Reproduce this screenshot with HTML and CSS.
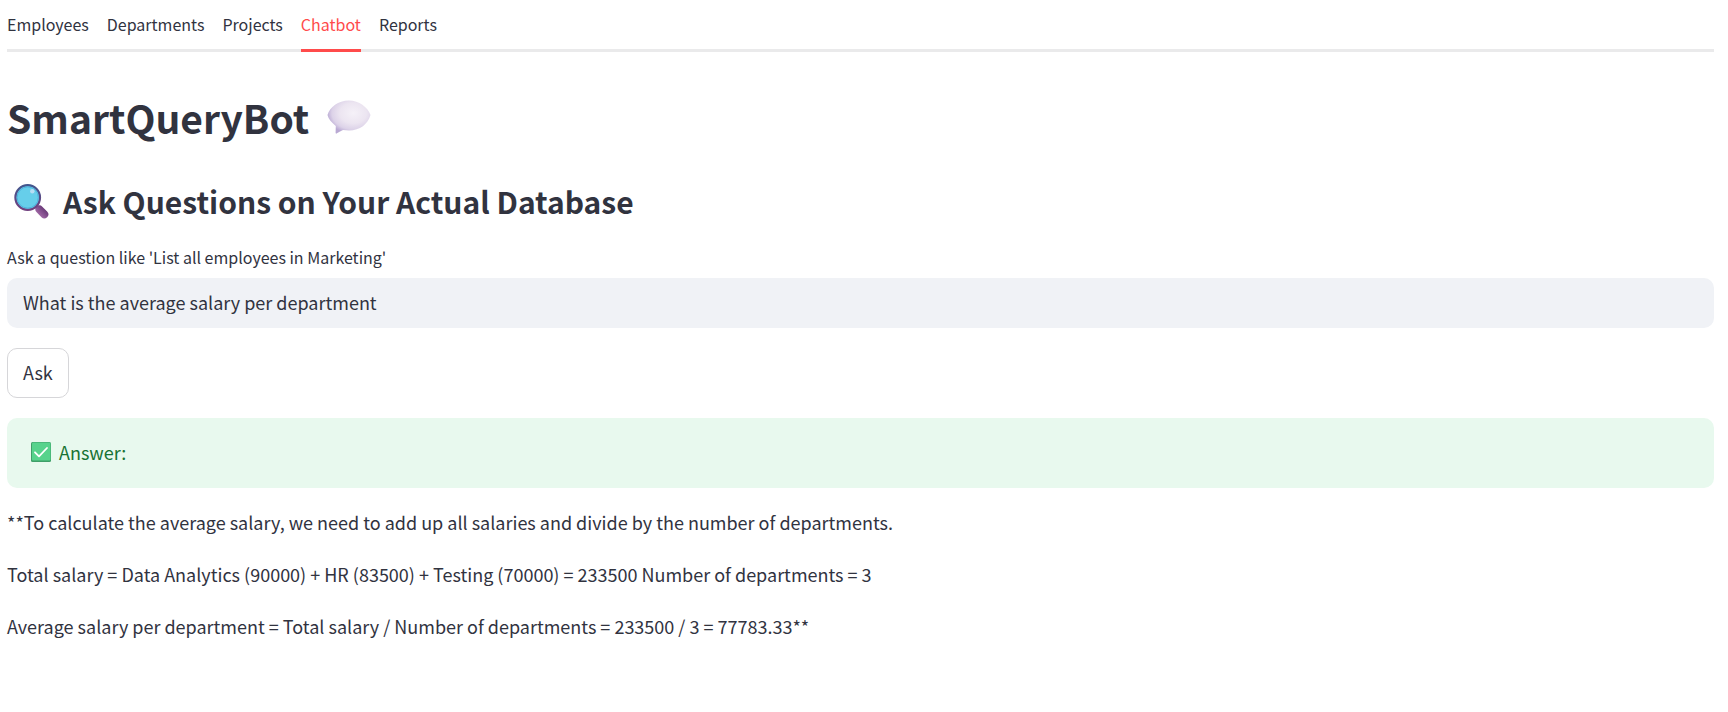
FILE: index.html
```html
<!DOCTYPE html>
<html lang="en">
<head>
  <meta charset="utf-8">
  <meta name="viewport" content="width=device-width, initial-scale=1">
  <title>SmartQueryBot</title>
  <link rel="stylesheet" href="styles.css">
</head>
<body>
  <nav class="tabs">
    <a class="tab" href="#employees">Employees</a>
    <a class="tab" href="#departments">Departments</a>
    <a class="tab" href="#projects">Projects</a>
    <a class="tab tab-active" href="#chatbot" aria-current="page">Chatbot</a>
    <a class="tab" href="#reports">Reports</a>
  </nav>
  <main class="page">
    <h1 class="title">
      <span>SmartQueryBot</span>
      <svg class="title-icon" viewBox="0 0 44 34" aria-hidden="true">
        <defs>
          <radialGradient id="bubble" cx="0.6" cy="0.38" r="0.62">
            <stop offset="0" stop-color="#f5f1f8"/>
            <stop offset="0.5" stop-color="#ece5f1"/>
            <stop offset="0.8" stop-color="#dcd2e8"/>
            <stop offset="1" stop-color="#b9a9d3"/>
          </radialGradient>
        </defs>
        <path fill="url(#bubble)" d="M22 0.500C32 0.500 40.500 7 43.500 15C41 24 33 30.500 22 30.500C20 30.500 18 30.200 16 30C13.500 31 11.500 32.200 9.500 33.500Q8.600 34 8.600 32.500L8.800 26C4.500 22.500 1.500 19 .5 15C3 7 11 .5 22 .5Z"/>
      </svg>
    </h1>
    <h2 class="subtitle">
      <svg class="subtitle-icon" viewBox="0 0 35 35" aria-hidden="true">
        <defs>
          <linearGradient id="handle" x1="0" y1="1" x2="1" y2="0">
            <stop offset="0" stop-color="#9a62a0"/>
            <stop offset="1" stop-color="#6f3e7c"/>
          </linearGradient>
          <linearGradient id="rim" x1="0" y1="0" x2="0" y2="1">
            <stop offset="0" stop-color="#42568d"/>
            <stop offset="1" stop-color="#71407f"/>
          </linearGradient>
        </defs>
        <path d="M22 22L30 30" stroke="#6f3e7c" stroke-width="4"/>
        <path d="M25.500 25.500L30.300 30.300" stroke="url(#handle)" stroke-width="8" stroke-linecap="round"/>
        <circle cx="13.700" cy="13.500" r="12.300" fill="#66ceea" stroke="url(#rim)" stroke-width="2.200"/>
        <circle cx="13.700" cy="13.500" r="10.600" fill="none" stroke="#4fb2dc" stroke-width="1"/>
        <circle cx="18.300" cy="7.300" r="2.200" fill="#b8def4"/>
      </svg>
      <span>Ask Questions on Your Actual Database</span>
    </h2>
    <form class="query">
      <label class="query-label" for="question">Ask a question like 'List all employees in Marketing'</label>
      <input class="query-input" id="question" type="text" value="What is the average salary per department">
      <button class="query-button" type="button">Ask</button>
    </form>
    <div class="alert" role="status">
      <svg class="alert-icon" viewBox="0 0 20 20" aria-hidden="true">
        <rect width="20" height="20" rx="1.500" fill="#3f9f68"/>
        <rect x="1" y="0.500" width="18.500" height="18" rx="1" fill="#57d38c"/>
        <path d="M4 10.300L8 14.300L16 6" fill="none" stroke="#fff" stroke-width="1.800" stroke-linecap="round" stroke-linejoin="round"/>
      </svg>
      <span>Answer:</span>
    </div>
    <section class="answer">
      <p class="answer-line">**To calculate the average salary, we need to add up all salaries and divide by the number of departments.</p>
      <p class="answer-line">Total salary = Data Analytics (90000) + HR (83500) + Testing (70000) = 233500 Number of departments = 3</p>
      <p class="answer-line">Average salary per department = Total salary / Number of departments = 233500 / 3 = 77783.33**</p>
    </section>
  </main>
</body>
</html>
```
FILE: styles.css
```css
* {
  box-sizing: border-box;
}

body {
  margin: 0;
  padding: 0 14px 0 7px;
  background: #fff;
  color: #31333f;
  font-family: "Noto Sans CJK SC", "Noto Sans", sans-serif;
  font-size: 18px;
  line-height: 32px;
}

.tabs {
  display: flex;
  gap: 18px;
  border-bottom: 3px solid #eaeaeb;
}

.tab {
  margin-bottom: -3px;
  padding: 4px 0 5px;
  border-bottom: 3px solid transparent;
  color: inherit;
  font-size: 16px;
  line-height: 40px;
  text-decoration: none;
}

.tab-active {
  border-bottom-color: #ff4b4b;
  color: #ff4b4b;
}

.title,
.subtitle {
  display: flex;
  align-items: center;
  margin: 0;
  font-weight: 600;
}

.title {
  gap: 18px;
  padding-top: 38px;
  font-size: 39px;
  line-height: 54px;
}

.title-icon {
  width: 44px;
  height: 34px;
}

.subtitle {
  gap: 14px;
  padding: 35px 0 20px 7px;
  font-size: 30px;
  line-height: 44px;
}

.subtitle-icon {
  width: 35px;
  height: 35px;
}

.query {
  display: flex;
  flex-direction: column;
  align-items: flex-start;
}

.query-label {
  padding-bottom: 7px;
  font-size: 16px;
  line-height: 28px;
}

.query-input,
.query-button {
  height: 50px;
  border-radius: 10px;
  color: inherit;
  font: inherit;
}

.query-input {
  width: 100%;
  padding: 0 16px 2px;
  border: 0;
  background: #f0f2f6;
}

.query-button {
  margin: 20px 0;
  padding: 0 15px 2px;
  border: 1px solid #d6d6d9;
  background: #fff;
}

.alert {
  display: flex;
  align-items: center;
  gap: 8px;
  padding: 18px 24px 20px;
  border-radius: 10px;
  background: #e8f9ee;
  color: #177233;
}

.alert-icon {
  width: 20px;
  height: 20px;
}

.answer {
  padding: 18px 0;
}

.answer-line {
  margin: 0 0 20px;
}
```
